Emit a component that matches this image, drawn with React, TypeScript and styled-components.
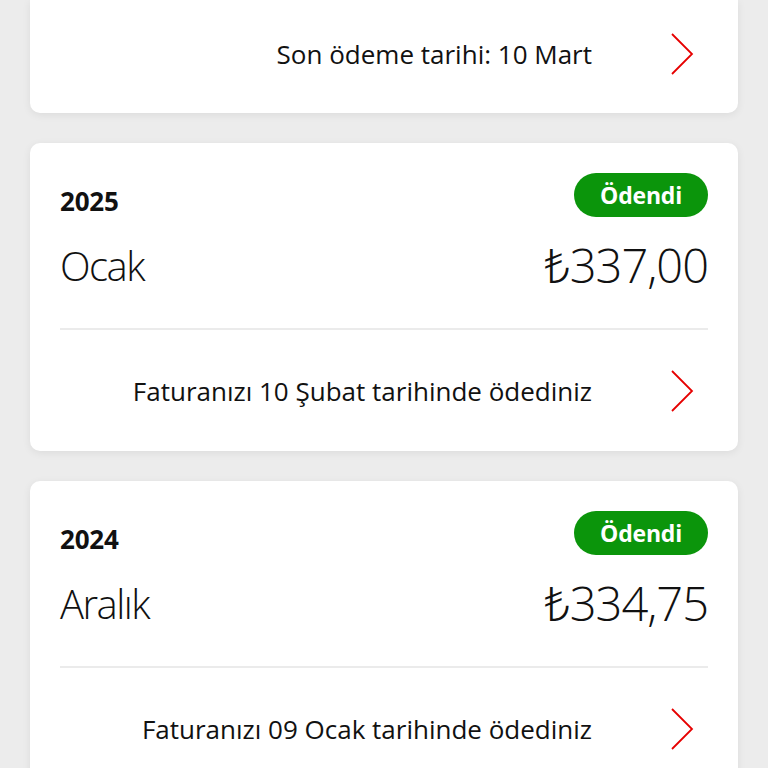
import styled, { createGlobalStyle } from "styled-components";

type Bill = {
  year: string;
  month: string;
  amount: string;
  note: string;
};

const bills: Bill[] = [
  {
    year: "2025",
    month: "Ocak",
    amount: "₺337,00",
    note: "Faturanızı 10 Şubat tarihinde ödediniz",
  },
  {
    year: "2024",
    month: "Aralık",
    amount: "₺334,75",
    note: "Faturanızı 09 Ocak tarihinde ödediniz",
  },
];

function Chevron() {
  return (
    <ChevronIcon width="24" height="42" viewBox="0 0 24 42" aria-hidden>
      <polyline
        points="2,1 22,21 2,41"
        fill="none"
        stroke="#e60000"
        strokeWidth="1.8"
      />
    </ChevronIcon>
  );
}

function App() {
  return (
    <Page>
      <GlobalStyle />
      <Card cut>
        <Footer short>
          <FooterText>Son ödeme tarihi: 10 Mart</FooterText>
          <Chevron />
        </Footer>
      </Card>
      {bills.map((bill) => (
        <Card key={bill.year + bill.month}>
          <Body>
            <HeaderRow>
              <Year>{bill.year}</Year>
              <Badge>Ödendi</Badge>
            </HeaderRow>
            <MainRow>
              <Month>{bill.month}</Month>
              <Amount>{bill.amount}</Amount>
            </MainRow>
          </Body>
          <Divider />
          <Footer>
            <FooterText>{bill.note}</FooterText>
            <Chevron />
          </Footer>
        </Card>
      ))}
    </Page>
  );
}

const GlobalStyle = createGlobalStyle`
  html, body {
    margin: 0;
    padding: 0;
    background: #ececec;
    font-family: "Open Sans", "Noto Sans", sans-serif;
    color: #111;
    overflow: hidden;
  }
`;

const Page = styled.main`
  display: flex;
  flex-direction: column;
  gap: 30px;
  padding: 0 30px 40px;
`;

const Card = styled.section<{ cut?: boolean }>`
  background: #fff;
  border-radius: ${({ cut }) => (cut ? "0 0 10px 10px" : "10px")};
  box-shadow: 0 2px 8px rgba(0, 0, 0, 0.07);
  padding: 0 30px;
`;

const Body = styled.div`
  display: flex;
  flex-direction: column;
  padding-top: 30px;
`;

const HeaderRow = styled.div`
  display: flex;
  justify-content: space-between;
  align-items: flex-end;
  height: 44px;
`;

const Year = styled.span`
  font-size: 26px;
  font-weight: 700;
  line-height: 1;
  letter-spacing: -0.2px;
  padding-bottom: 3px;
`;

const Badge = styled.span`
  display: inline-flex;
  align-items: center;
  justify-content: center;
  height: 44px;
  padding: 0 26px;
  border-radius: 22px;
  background: #0b950b;
  color: #fff;
  font-size: 23px;
  font-weight: 700;
  letter-spacing: -0.2px;
`;

const MainRow = styled.div`
  display: flex;
  justify-content: space-between;
  align-items: center;
  height: 62px;
  margin-top: 17px;
`;

const Month = styled.span`
  font-size: 40px;
  font-weight: 300;
  letter-spacing: -1.5px;
`;

const Amount = styled.span`
  font-size: 47px;
  font-weight: 300;
  letter-spacing: -1px;
`;

const Divider = styled.hr`
  margin: 32px 0 0;
  border: none;
  border-top: 2px solid #ebebeb;
`;

const Footer = styled.div<{ short?: boolean }>`
  display: flex;
  align-items: center;
  justify-content: flex-end;
  gap: 78px;
  height: ${({ short }) => (short ? "107px" : "121px")};
  padding-bottom: ${({ short }) => (short ? "6px" : "0")};
  padding-right: 14px;
`;

const FooterText = styled.span`
  font-size: 26px;
  font-weight: 400;
  letter-spacing: 0;
`;

const ChevronIcon = styled.svg`
  flex: none;
`;

export default App;
